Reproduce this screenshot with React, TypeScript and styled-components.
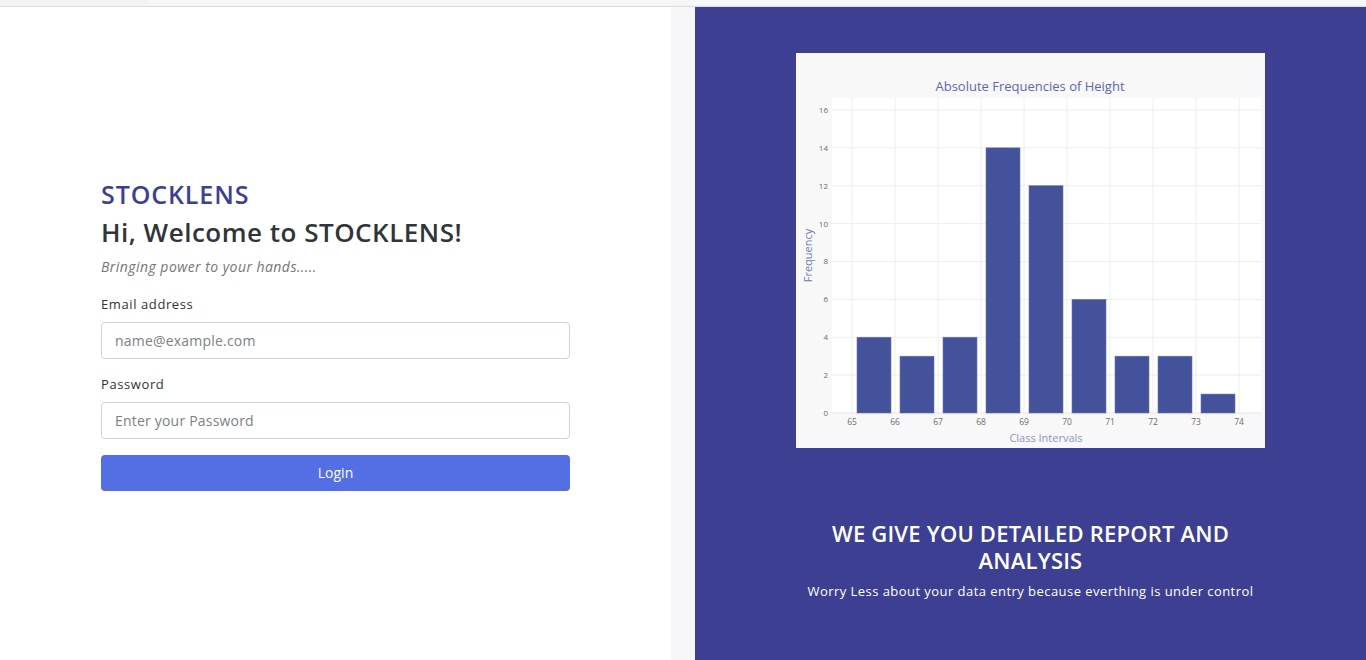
import React from "react";
import styled, { createGlobalStyle } from "styled-components";

const Global = createGlobalStyle`
  html, body { margin: 0; padding: 0; }
  body { font-family: "Open Sans", "Noto Sans", sans-serif; background: #fff; }
  * { box-sizing: border-box; }
`;

const Page = styled.div`
  width: 1366px;
  height: 660px;
  display: flex;
  flex-direction: column;
  overflow: hidden;
`;

const TopStrip = styled.div`
  height: 7px;
  background: #f3f3f3;
  border-bottom: 1px solid #dcdcdc;
  display: flex;
  padding-left: 147px;
`;

const TopTab = styled.div`
  flex: 1;
  height: 5px;
  background: #f7f7f7;
  border-bottom-left-radius: 6px;
`;

const Main = styled.div`
  flex: 1;
  display: flex;
  gap: 24px;
  background: #f7f7f9;
`;

const LeftCol = styled.section`
  width: 671px;
  background: #fff;
  padding: 2px 101px 0;
  display: flex;
  flex-direction: column;
  justify-content: center;
`;

const Brand = styled.div`
  font-size: 25px;
  font-weight: 600;
  letter-spacing: 0.9px;
  color: #3d3f93;
  line-height: 30px;
`;

const Heading = styled.h1`
  margin: 6px 0 0;
  font-size: 26px;
  font-weight: 600;
  letter-spacing: 0.5px;
  color: #30343b;
  line-height: 34px;
`;

const Tagline = styled.p`
  margin: 8px 0 0;
  font-size: 14px;
  font-style: italic;
  letter-spacing: 0.45px;
  color: #757575;
  line-height: 20px;
`;

const Field = styled.div<{ $first?: boolean }>`
  margin-top: ${(p) => (p.$first ? "17px" : "15px")};
  display: flex;
  flex-direction: column;
`;

const Label = styled.label`
  font-size: 13px;
  letter-spacing: 0.6px;
  color: #2f3338;
  line-height: 20px;
  margin-bottom: 8px;
`;

const Input = styled.input`
  width: 469px;
  height: 37px;
  border: 1px solid #ced4da;
  border-radius: 4px;
  padding: 0 13px;
  font-family: inherit;
  font-size: 14px;
  letter-spacing: 0.2px;
  color: #333;
  background: #fff;
  &::placeholder { color: #7c7f84; }
`;

const Button = styled.button`
  margin-top: 16px;
  width: 469px;
  height: 36px;
  border: none;
  border-radius: 4px;
  background: #536fe3;
  color: #fff;
  font-family: inherit;
  font-size: 14px;
`;

const RightCol = styled.section`
  flex: 1;
  background: #3d3f93;
  padding: 46px 101px 0;
  display: flex;
  flex-direction: column;
  align-items: center;
`;

const ChartCard = styled.div`
  width: 469px;
  height: 395px;
  background: #f8f8f8;
`;

const PromoTitle = styled.h2`
  margin: 72px 0 0;
  font-size: 22px;
  font-weight: 600;
  letter-spacing: 0.2px;
  color: #fff;
  text-align: center;
  line-height: 27px;
  width: 440px;
`;

const PromoText = styled.p`
  margin: 7px 0 0;
  font-size: 13px;
  letter-spacing: 0.45px;
  color: #fff;
  text-align: center;
  line-height: 20px;
  white-space: nowrap;
`;

const data = [4, 3, 4, 14, 12, 6, 3, 3, 1];

function Histogram() {
  const ox = -796;
  const oy = -53;
  const plotL = 832 + ox;
  const plotR = 1261 + ox;
  const plotT = 98 + oy;
  const zeroY = 413 + oy;
  const unit = 18.94;
  const tick0 = 852 + ox;
  const step = 43;
  return (
    <svg width="469" height="395" viewBox="0 0 469 395" style={{ display: "block" }}>
      <rect x={plotL} y={plotT} width={plotR - plotL} height={zeroY - plotT} fill="#fff" />
      {Array.from({ length: 9 }, (_, i) => {
        const y = zeroY - i * 2 * unit;
        return (
          <g key={"h" + i}>
            {i > 0 && <line x1={plotL} x2={plotR} y1={y} y2={y} stroke="#eeeeee" strokeWidth="1" />}
            <text x={plotL - 4} y={y + 3} fontSize="8" fill="#6b6b6b" textAnchor="end" fontFamily="Open Sans, sans-serif">{i * 2}</text>
          </g>
        );
      })}
      {Array.from({ length: 10 }, (_, i) => {
        const x = tick0 + i * step;
        return (
          <g key={"v" + i}>
            <line x1={x} x2={x} y1={plotT} y2={zeroY} stroke="#eeeeee" strokeWidth="1" />
            <text x={x} y={zeroY + 12} fontSize="8.5" fill="#6b6b6b" textAnchor="middle" fontFamily="Open Sans, sans-serif">{65 + i}</text>
          </g>
        );
      })}
      <line x1={plotL} x2={plotR} y1={zeroY} y2={zeroY} stroke="#e6e6e6" strokeWidth="1" />
      {data.map((v, i) => {
        const x = tick0 + i * step + 5;
        const h = v * unit;
        return <rect key={"b" + i} x={x} y={zeroY - h} width={34} height={h} fill="#44529b" stroke="#6a76b6" strokeWidth="0.6" />;
      })}
      <text x={234} y={38} fontSize="13" fill="#5b67b1" textAnchor="middle" fontFamily="Open Sans, sans-serif">Absolute Frequencies of Height</text>
      <text x={250} y={389} fontSize="11" fill="#8b93c9" textAnchor="middle" fontFamily="Open Sans, sans-serif">Class Intervals</text>
      <text transform={`translate(16 ${(plotT + zeroY) / 2}) rotate(-90)`} fontSize="11" fill="#6f79b8" textAnchor="middle" fontFamily="Open Sans, sans-serif">Frequency</text>
    </svg>
  );
}

export default function App() {
  return (
    <>
      <Global />
      <Page>
        <TopStrip>
          <TopTab />
        </TopStrip>
        <Main>
          <LeftCol>
            <Brand>STOCKLENS</Brand>
            <Heading>Hi, Welcome to STOCKLENS!</Heading>
            <Tagline>Bringing power to your hands.....</Tagline>
            <Field $first>
              <Label htmlFor="email">Email address</Label>
              <Input id="email" type="email" placeholder="name@example.com" />
            </Field>
            <Field>
              <Label htmlFor="password">Password</Label>
              <Input id="password" type="password" placeholder="Enter your Password" />
            </Field>
            <Button>Login</Button>
          </LeftCol>
          <RightCol>
            <ChartCard>
              <Histogram />
            </ChartCard>
            <PromoTitle>WE GIVE YOU DETAILED REPORT AND ANALYSIS</PromoTitle>
            <PromoText>Worry Less about your data entry because everthing is under control</PromoText>
          </RightCol>
        </Main>
      </Page>
    </>
  );
}
